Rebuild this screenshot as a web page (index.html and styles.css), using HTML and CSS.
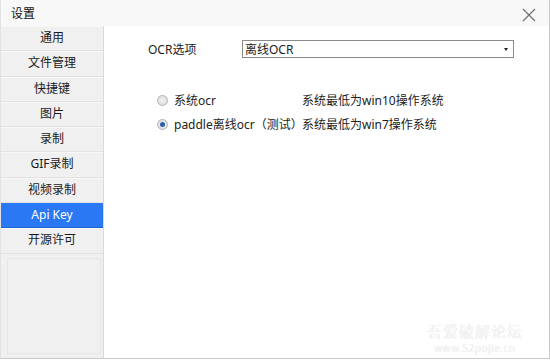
FILE: index.html
```html
<!DOCTYPE html>
<html lang="zh-CN">
<head>
    <meta charset="UTF-8">
    <title>设置</title>
    <link rel="stylesheet" href="styles.css">
</head>
<body>
    <div class="window">
        <div class="titlebar">
            <span class="title">设置</span>
            <svg class="close" width="14" height="14" viewBox="0 0 14 14">
                <path d="M1 1 L13 13 M13 1 L1 13" stroke="#707070" stroke-width="1.2" fill="none"/>
            </svg>
        </div>
        <div class="body">
            <aside class="sidebar">
                <ul class="menu">
                    <li>通用</li>
                    <li>文件管理</li>
                    <li>快捷键</li>
                    <li>图片</li>
                    <li>录制</li>
                    <li>GIF录制</li>
                    <li>视频录制</li>
                    <li class="active">Api Key</li>
                    <li>开源许可</li>
                </ul>
                <div class="menu-rest"></div>
            </aside>
            <main class="content">
                <div class="row">
                    <label class="label">OCR选项</label>
                    <div class="select">
                        <span>离线OCR</span>
                        <span class="arrow"></span>
                    </div>
                </div>
                <div class="options">
                    <div class="option">
                        <span class="radio"></span>
                        <span class="name">系统ocr</span>
                        <span class="desc">系统最低为win10操作系统</span>
                    </div>
                    <div class="option">
                        <span class="radio checked"></span>
                        <span class="name">paddle离线ocr（测试）</span>
                        <span class="desc">系统最低为win7操作系统</span>
                    </div>
                </div>
            </main>
        </div>
        <div class="watermark">
            <div class="wm-big">吾爱破解论坛</div>
            <div class="wm-small">www.52pojie.cn</div>
        </div>
    </div>
</body>
</html>
```

FILE: styles.css
```css
body {
    margin: 0;
    font-family: "Noto Sans", "Noto Sans CJK SC", sans-serif;
    font-size: 12px;
    color: #222;
    background: #fff;
}
.window {
    position: relative;
    width: 548px;
    height: 358px;
    border-right: 1px solid #c9c9c9;
    border-bottom: 1px solid #c9c9c9;
    border-left: 1px solid #e2e2e2;
    display: flex;
    flex-direction: column;
    background: #fff;
}
.titlebar {
    height: 26px;
    display: flex;
    align-items: center;
    justify-content: space-between;
    background: #f8f8f8;
    padding: 0 13px 0 10px;
    flex-shrink: 0;
}
.title {
    font-size: 12px;
    color: #111;
}
.close {
    margin-top: 3px;
}
.body {
    flex: 1;
    display: flex;
    min-height: 0;
}
.sidebar {
    width: 102px;
    display: flex;
    flex-direction: column;
    border-right: 1px solid #dadada;
    background: #f0f0f0;
}
.menu {
    list-style: none;
    margin: 0;
    padding: 0;
}
.menu li {
    height: 24.3px;
    line-height: 24px;
    text-align: center;
    border-bottom: 1px solid #e2e2e2;
    box-shadow: inset 0 1px 0 #f7f7f7;
    background: #f0f0f0;
    color: #1a1a1a;
}
.menu li.active {
    background: #2a78f4;
    color: #fff;
    box-shadow: none;
    border-bottom-color: #1e62cf;
}
.menu-rest {
    flex: 1;
    margin: 4px 2px 4px 6px;
    border: 1px solid #e6e6e6;
    background: #f0f0f0;
}
.content {
    flex: 1;
    padding: 14px 35px 0 44px;
}
.row {
    display: flex;
    align-items: center;
}
.label {
    width: 94px;
}
.select {
    flex: 1;
    height: 16px;
    border: 1px solid #8a8a8a;
    display: flex;
    align-items: center;
    justify-content: space-between;
    padding: 0 5px 0 2px;
    background: #fff;
}
.arrow {
    width: 0;
    height: 0;
    border-left: 2.5px solid transparent;
    border-right: 2.5px solid transparent;
    border-top: 3px solid #222;
}
.options {
    margin-top: 33px;
    padding-left: 9px;
    display: flex;
    flex-direction: column;
    gap: 6px;
}
.option {
    display: flex;
    align-items: center;
    height: 18px;
}
.radio {
    width: 9px;
    height: 9px;
    border-radius: 50%;
    border: 1px solid #b4b4b4;
    background: radial-gradient(circle, #f2f2f2 0%, #d8d8d8 100%);
    margin-right: 6px;
    position: relative;
    flex-shrink: 0;
}
.radio.checked::after {
    content: "";
    position: absolute;
    left: 2px;
    top: 2px;
    width: 5px;
    height: 5px;
    border-radius: 50%;
    background: #2f5fa8;
}
.name {
    width: 128px;
}
.watermark {
    position: absolute;
    right: 26px;
    bottom: 3px;
    text-align: center;
    color: #f6f6f6;
    text-shadow: 0 0 1px #dadada;
}
.wm-big {
    font-size: 15px;
    letter-spacing: 1px;
}
.wm-small {
    font-size: 10px;
    letter-spacing: 0.5px;
}
```
